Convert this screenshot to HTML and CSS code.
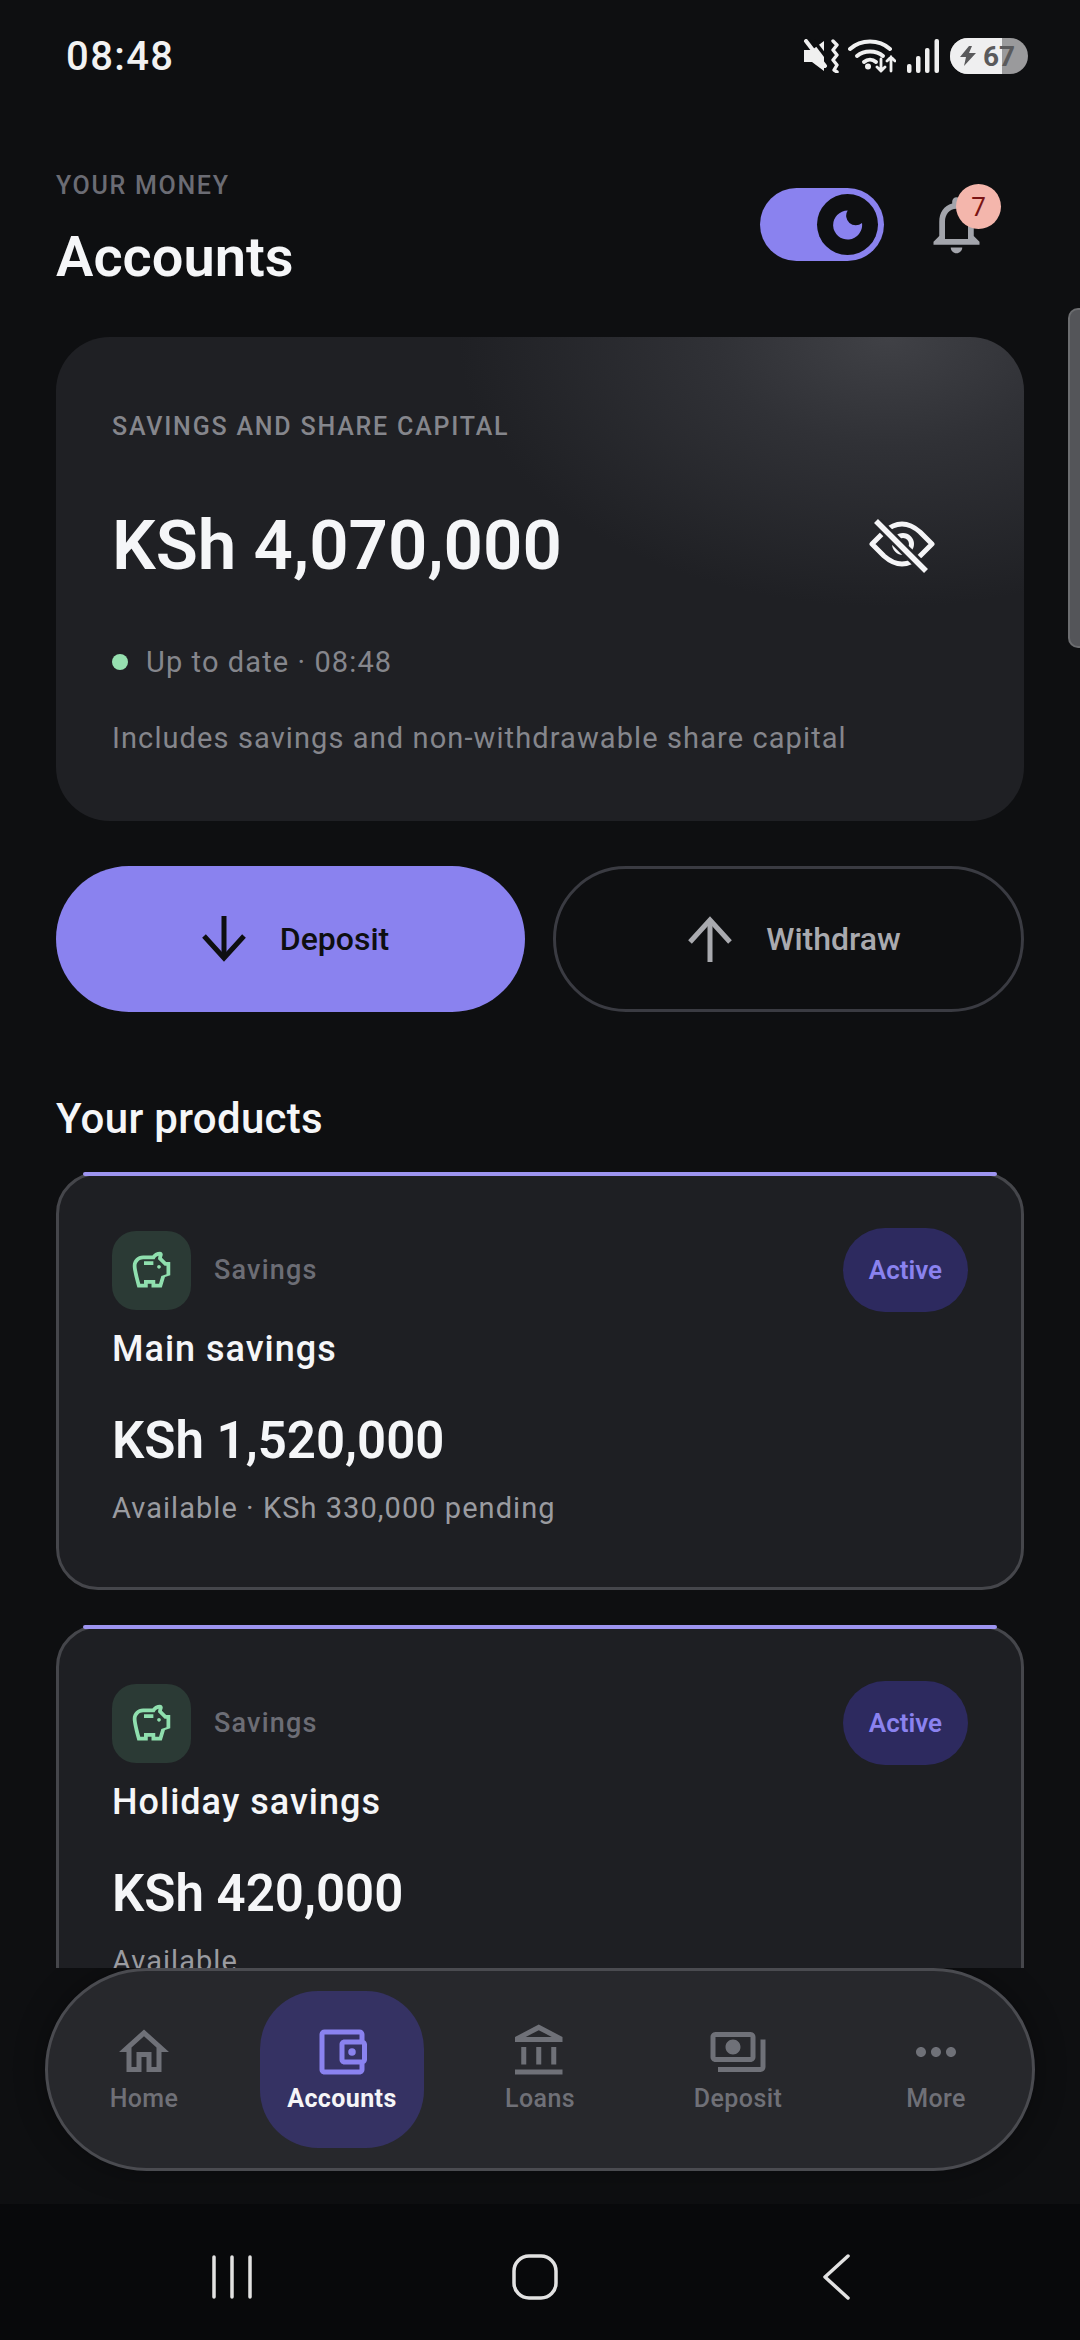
FILE: index.html
```html
<!DOCTYPE html>
<html lang="en">
<head>
<meta charset="utf-8">
<title>Accounts</title>
<link rel="stylesheet" href="styles.css">
</head>
<body>
<div class="phone">
  <div class="status">
    <span class="clock">08:48</span>
    <div class="status-icons">
      <svg class="s-mute" viewBox="0 0 36 34" fill="#f0f0f0"><path d="M1 11h8l12-9v30L9 23H1z"/><path d="M8 -2l19 25" stroke="#0e0f11" stroke-width="3.500"/><path d="M3 2l19 25" stroke="#f0f0f0" stroke-width="4" stroke-linecap="round"/><path d="M30 2l4 4-4 5 4 5-4 5 4 5-3 5 3 2" fill="none" stroke="#f0f0f0" stroke-width="3.400" stroke-linecap="round" stroke-linejoin="round"/></svg>
      <svg class="s-wifi" viewBox="0 0 48 34" fill="none" stroke="#f0f0f0" stroke-width="4" stroke-linecap="round"><path d="M2 10c11-10 29-10 40 0"/><path d="M9 17c7-6 19-6 26 0"/><path d="M16 23c3.500-3 8.500-3 12 0"/><circle cx="20" cy="27.500" r="3" fill="#f0f0f0" stroke="none"/><path d="M33 20v12M29 28l4 4 4-4M43 32V18M39 22l4-4 4 4" stroke-width="2.800"/></svg>
      <svg class="s-signal" viewBox="0 0 33 34" fill="#f0f0f0"><rect x="0" y="25" width="4.500" height="9" rx="2"/><rect x="9" y="17" width="4.500" height="17" rx="2"/><rect x="18" y="9" width="4.500" height="25" rx="2"/><rect x="27.500" y="0" width="4.500" height="34" rx="2"/></svg>
      <div class="battery"><div class="battery-fill"></div>
        <div class="battery-label"><svg class="s-bolt" viewBox="0 0 16 20" fill="#5a5a5c"><path d="M9 0L0 11h6l-2 9 12-13H9l3-7z"/></svg><span>67</span></div>
      </div>
    </div>
  </div>

  <main class="scroll">
    <div class="scrollbar"></div>
    <header class="page-head">
      <div>
        <div class="eyebrow">YOUR MONEY</div>
        <h1 class="title">Accounts</h1>
      </div>
      <div class="head-actions">
        <div class="toggle">
          <div class="knob">
            <svg class="moon" viewBox="0 0 30 30"><path fill="#8a82ef" d="M14.700.5A14.500 14.500 0 1 0 29 13 9.600 9.600 0 0 1 14.700.5z"/></svg>
          </div>
        </div>
        <div class="bell">
          <svg class="bell-icon" viewBox="0 0 24 24" fill="#a3a5ac"><path d="M12 22c1.100 0 2-.9 2-2h-4c0 1.100.9 2 2 2zm6-6v-5c0-3.070-1.630-5.640-4.500-6.320V4c0-.83-.67-1.500-1.500-1.500s-1.500.67-1.500 1.500v.68C7.640 5.360 6 7.920 6 11v5l-2 2v1h16v-1l-2-2zm-2 1H8v-6c0-2.480 1.510-4.500 4-4.500s4 2.020 4 4.500v6z"/></svg>
          <span class="badge">7</span>
        </div>
      </div>
    </header>

    <section class="hero">
      <div class="hero-label">SAVINGS AND SHARE CAPITAL</div>
      <div class="hero-row">
        <div class="hero-amount">KSh 4,070,000</div>
        <svg class="eye" viewBox="18 18 66 54" fill="none" stroke="#f5f5f7" stroke-width="5" stroke-linejoin="round"><path d="M21 43L33 31Q51 15 69 31L81 43 69 55Q51 71 33 55z"/><circle cx="52" cy="43" r="8.500"/><path d="M25 20l50 50" stroke="#25262a" stroke-width="11"/><path d="M25 20l50 50" stroke-width="5.500"/></svg>
      </div>
      <div class="hero-status"><span class="dot"></span><span>Up to date · 08:48</span></div>
      <div class="hero-note">Includes savings and non-withdrawable share capital</div>
    </section>

    <div class="actions">
      <button class="btn btn-primary">
        <svg class="arrow" viewBox="0 0 44 46" fill="none" stroke="#0e0f11" stroke-width="5"><path d="M22 0v42"/><path d="M2 20l20 22 20-22"/></svg>
        <span>Deposit</span>
      </button>
      <button class="btn btn-outline">
        <svg class="arrow" viewBox="0 0 44 46" fill="none" stroke="#a9aaaf" stroke-width="5"><path d="M22 46V4"/><path d="M2 26L22 4l20 22"/></svg>
        <span>Withdraw</span>
      </button>
    </div>

    <h2 class="section-title">Your products</h2>

    <article class="product">
      <div class="product-top">
        <div class="pig-box"><svg class="pig" viewBox="0 0 24 24" fill="#8fdfae"><path d="M15 10c0-.55.45-1 1-1s1 .45 1 1-.45 1-1 1-1-.45-1-1zM8 9h5V7H8v2zm14-1.500v6.970l-2.820.94L17.500 21H12v-2h-2v2H4.500S2 12.540 2 9.500 4.460 4 7.500 4h5c.91-1.210 2.360-2 4-2 .83 0 1.500.67 1.500 1.500 0 .21-.04.4-.12.58-.14.32-.26.69-.32 1.090L19.830 7.500H22zm-2 2h-1l-3.500-3.500c0-.65.09-1.290.26-1.910-.97.25-1.760.97-2.090 1.910H7.500C5.570 6 4 7.570 4 9.500c0 1.880 1.220 6.650 2.010 9.500H8v-2h6v2h2.010l1.230-4.110 2.760-.93V9.500z"/></svg></div>
        <span class="kind">Savings</span>
        <span class="chip">Active</span>
      </div>
      <div class="product-name">Main savings</div>
      <div class="product-amount">KSh 1,520,000</div>
      <div class="product-note">Available · KSh 330,000 pending</div>
    </article>

    <article class="product">
      <div class="product-top">
        <div class="pig-box"><svg class="pig" viewBox="0 0 24 24" fill="#8fdfae"><path d="M15 10c0-.55.45-1 1-1s1 .45 1 1-.45 1-1 1-1-.45-1-1zM8 9h5V7H8v2zm14-1.500v6.970l-2.820.94L17.500 21H12v-2h-2v2H4.500S2 12.540 2 9.500 4.460 4 7.500 4h5c.91-1.210 2.360-2 4-2 .83 0 1.500.67 1.500 1.500 0 .21-.04.4-.12.58-.14.32-.26.69-.32 1.090L19.830 7.500H22zm-2 2h-1l-3.500-3.500c0-.65.09-1.290.26-1.910-.97.25-1.760.97-2.090 1.910H7.500C5.570 6 4 7.570 4 9.500c0 1.880 1.220 6.650 2.010 9.500H8v-2h6v2h2.010l1.230-4.110 2.760-.93V9.500z"/></svg></div>
        <span class="kind">Savings</span>
        <span class="chip">Active</span>
      </div>
      <div class="product-name">Holiday savings</div>
      <div class="product-amount">KSh 420,000</div>
      <div class="product-note">Available</div>
    </article>
  </main>

  <div class="nav-wrap">
    <nav class="nav">
      <div class="nav-item">
        <svg class="nav-icon" viewBox="0 0 24 24"><path d="M12 5.690l5 4.500V18h-2v-6H9v6H7v-7.810l5-4.500M12 3L2 12h3v8h6v-6h2v6h6v-8h3L12 3z"/></svg>
        <span>Home</span>
      </div>
      <div class="nav-item nav-active">
        <svg class="nav-icon" viewBox="0 0 24 24"><path d="M21 7.280V5c0-1.100-.9-2-2-2H5c-1.110 0-2 .9-2 2v14c0 1.100.89 2 2 2h14c1.100 0 2-.9 2-2v-2.280c.59-.35 1-.98 1-1.720V9c0-.74-.41-1.380-1-1.720zM20 9v6h-7V9h7zM5 19V5h14v2h-6c-1.100 0-2 .9-2 2v6c0 1.100.9 2 2 2h6v2H5z"/><circle cx="16" cy="12" r="1.500"/></svg>
        <span>Accounts</span>
      </div>
      <div class="nav-item">
        <svg class="nav-icon" viewBox="0 0 24 24"><path d="M6.500 10h-2v7h2v-7zm6 0h-2v7h2v-7zm8.500 9H2v2h19v-2zm-2.500-9h-2v7h2v-7zm-7-6.740L16.710 6H6.290l5.210-2.740m0-2.260L2 6v2h19V6l-9.500-5z"/></svg>
        <span>Loans</span>
      </div>
      <div class="nav-item">
        <svg class="nav-icon" viewBox="0 0 24 24"><path d="M19 14V6c0-1.100-.9-2-2-2H3c-1.100 0-2 .9-2 2v8c0 1.100.9 2 2 2h14c1.100 0 2-.9 2-2zm-2 0H3V6h14v8zm-7-7c-1.660 0-3 1.340-3 3s1.340 3 3 3 3-1.340 3-3-1.340-3-3-3zm13 0v11c0 1.100-.9 2-2 2H4v-2h17V7h2z"/></svg>
        <span>Deposit</span>
      </div>
      <div class="nav-item">
        <svg class="nav-icon" viewBox="0 0 24 24"><path d="M6 10c-1.100 0-2 .9-2 2s.9 2 2 2 2-.9 2-2-.9-2-2-2zm12 0c-1.100 0-2 .9-2 2s.9 2 2 2 2-.9 2-2-.9-2-2-2zm-6 0c-1.100 0-2 .9-2 2s.9 2 2 2 2-.9 2-2-.9-2-2-2z"/></svg>
        <span>More</span>
      </div>
    </nav>
  </div>

  <div class="android">
    <svg class="a-recents" viewBox="0 0 40 44" fill="none" stroke="#e2e2e2" stroke-width="3.500" stroke-linecap="round"><path d="M2 2v40M20 2v40M38 2v40"/></svg>
    <svg class="a-home" viewBox="0 0 46 46" fill="none" stroke="#e2e2e2" stroke-width="3.500"><rect x="2" y="2" width="42" height="42" rx="15"/></svg>
    <svg class="a-back" viewBox="0 0 30 46" fill="none" stroke="#e2e2e2" stroke-width="3.500" stroke-linecap="round" stroke-linejoin="round"><path d="M26 2L3 23l23 21"/></svg>
  </div>
</div>
</body>
</html>
```

FILE: styles.css
```css
* { box-sizing: border-box; }
html, body { margin: 0; padding: 0; background: #0e0f11; }
body { font-family: Roboto, "Liberation Sans", sans-serif; color: #f5f5f7; }
.phone { width: 1080px; height: 2340px; display: flex; flex-direction: column; overflow: hidden; background: #0e0f11; }

.status { height: 110px; flex: none; display: flex; justify-content: space-between; align-items: center; padding: 2px 52px 0 66px; }
.clock { font-size: 40px; font-weight: 500; color: #f2f2f2; letter-spacing: 1.400px; }
.status-icons { display: flex; align-items: center; }
.s-mute { width: 36px; height: 34px; margin-right: 9px; }
.s-wifi { width: 48px; height: 34px; margin-right: 11px; }
.s-signal { width: 33px; height: 34px; margin-right: 10px; }
.battery { width: 78px; height: 36px; border-radius: 18px; background: #9a9a9c; position: relative; overflow: hidden; }
.battery-fill { width: 52px; height: 100%; background: #efeff0; }
.battery-label { position: absolute; inset: 0; display: flex; align-items: center; padding-left: 10px; gap: 7px; color: #5a5a5c; font-size: 28px; font-weight: 700; }
.s-bolt { width: 16px; height: 20px; }

.scroll { position: relative; flex: none; height: 1858px; overflow: hidden; padding: 0 56px; }
.scrollbar { position: absolute; right: 0; top: 198px; width: 12px; height: 340px; background: #545559; border: 2px solid #6c6d70; border-right: 0; border-radius: 10px 0 0 10px; }

.page-head { display: flex; justify-content: space-between; align-items: flex-start; height: 227px; }
.eyebrow { margin-top: 61px; font-size: 25px; line-height: 30px; font-weight: 500; letter-spacing: 1.700px; color: #6b6c74; }
.title { margin: 24px 0 0; font-size: 56px; line-height: 64px; font-weight: 600; color: #f5f6f8; }
.head-actions { display: flex; align-items: flex-start; margin-top: 78px; margin-right: 33px; }
.toggle { width: 124px; height: 73px; border-radius: 37px; background: #8a82ef; padding: 6px 6px 6px 57px; }
.knob { width: 61px; height: 61px; border-radius: 50%; background: #0e0f11; display: flex; align-items: center; justify-content: center; }
.moon { width: 30px; height: 30px; }
.bell { position: relative; width: 69px; height: 69px; margin-left: 38px; margin-top: 2px; }
.bell-icon { width: 69px; height: 69px; display: block; }
.badge { position: absolute; left: 34px; top: -6px; width: 45px; height: 45px; border-radius: 50%; background: #f4b6ac; color: #7a1414; font-size: 26px; display: flex; align-items: center; justify-content: center; }

.hero { height: 484px; border-radius: 54px; padding: 75px 56px 0; background: radial-gradient(ellipse 430px 270px at 86% 0%, #404146 0%, #303136 40%, #1f2024 100%), #1f2024; }
.hero-label { font-size: 25px; line-height: 30px; font-weight: 500; letter-spacing: 1.800px; color: #85868c; }
.hero-row { display: flex; justify-content: space-between; align-items: center; margin-top: 54px; height: 100px; }
.hero-amount { font-size: 69px; line-height: 100px; font-weight: 600; color: #f5f6f8; }
.eye { width: 66px; height: 54px; margin-right: 33px; }
.hero-status { display: flex; align-items: center; gap: 18px; margin-top: 48px; font-size: 29px; line-height: 36px; letter-spacing: 1.100px; color: #85868c; }
.dot { width: 16px; height: 16px; border-radius: 50%; background: #96e0b0; }
.hero-note { margin-top: 40px; font-size: 29px; line-height: 36px; letter-spacing: 1.100px; color: #85868c; }

.actions { display: flex; gap: 28px; margin-top: 45px; }
.btn { flex: 1 1 0; min-width: 0; height: 146px; border-radius: 73px; border: 3px solid transparent; display: flex; align-items: center; justify-content: center; gap: 34px; font: 500 32px/40px Roboto, sans-serif; }
.btn-primary { background: #8a82ef; color: #0e0f11; padding: 0 0 0 10px; }
.btn-outline { background: transparent; border-color: #3a3b42; color: #a9aaaf; padding: 0 0 0 12px; }
.arrow { width: 44px; height: 46px; }

.section-title { margin: 82px 0 0; font-size: 42px; line-height: 50px; font-weight: 500; letter-spacing: .3px; color: #f5f6f8; }

.product { position: relative; height: 418px; margin-top: 28px; margin-bottom: 35px; border: 3px solid #45464b; border-radius: 42px; background: #1e1f23; padding: 53px 53px 0; }
.product::before { content: ""; position: absolute; top: -3px; left: 24px; right: 24px; height: 4px; background: #9d94f0; border-radius: 2px; }
.product + .product { margin-top: 0; }
.product-top { display: flex; align-items: center; height: 84px; }
.pig-box { width: 79px; height: 79px; border-radius: 24px; background: #2b3a35; display: flex; align-items: center; justify-content: center; }
.pig { width: 45px; height: 45px; }
.kind { margin-left: 23px; font-size: 27px; font-weight: 500; letter-spacing: 1.200px; color: #6c6d75; }
.chip { margin-left: auto; width: 125px; height: 84px; border-radius: 42px; background: #2d2a5f; color: #8a82ef; font-size: 26px; font-weight: 600; display: flex; align-items: center; justify-content: center; }
.product-name { margin-top: 15px; font-size: 36px; line-height: 44px; font-weight: 500; letter-spacing: 1px; color: #f5f6f8; }
.product-amount { margin-top: 38px; font-size: 51px; line-height: 64px; font-weight: 600; color: #f5f6f8; }
.product-note { margin-top: 17px; font-size: 29px; line-height: 36px; letter-spacing: 1.050px; color: #9a9ba0; }

.nav-wrap { flex: none; height: 236px; padding: 0 45px; }
.nav { height: 203px; border: 3px solid #4a4b50; border-radius: 102px; background: #27282c; display: grid; grid-template-columns: repeat(5, 198px); justify-content: center; align-items: center; box-shadow: 0 0 30px rgba(0,0,0,.35); }
.nav-item { display: flex; flex-direction: column; align-items: center; justify-self: center; justify-content: center; width: 164px; height: 157px; border-radius: 58px; color: #6f7077; font-size: 25px; line-height: 30px; font-weight: 500; letter-spacing: .4px; }
.nav-icon { width: 60px; height: 60px; fill: #6f7178; margin-bottom: 2px; margin-top: -4px; }
.nav-active { background: #353263; color: #f5f5f7; font-weight: 700; }
.nav-active .nav-icon { fill: #8a82ef; }

.android { flex: none; height: 136px; background: #08090b; display: flex; align-items: center; padding-top: 10px; }
.a-recents { width: 40px; height: 44px; margin-left: 212px; }
.a-home { width: 46px; height: 46px; margin-left: 260px; }
.a-back { width: 30px; height: 46px; margin-left: 264px; }
```
